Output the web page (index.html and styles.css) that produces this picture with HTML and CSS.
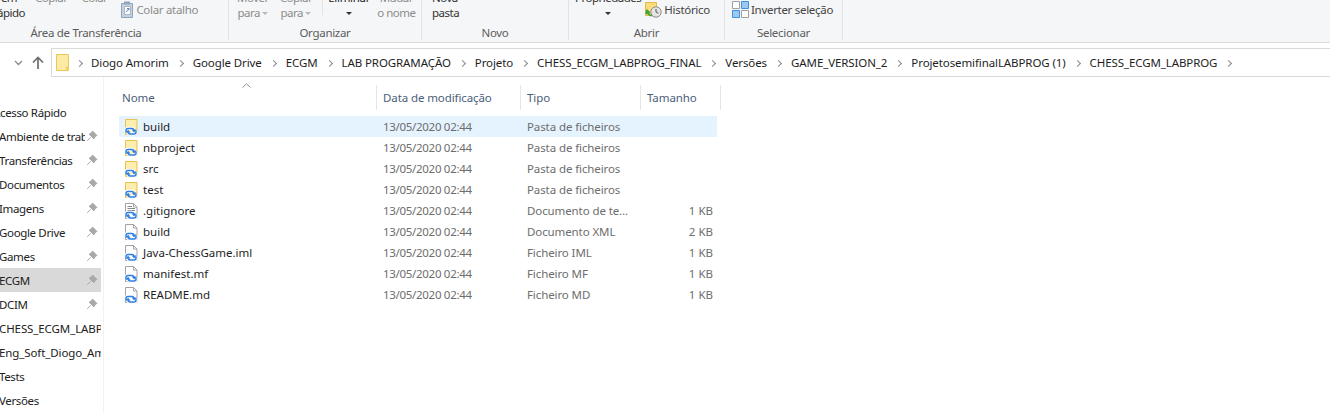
FILE: index.html
```html
<!DOCTYPE html>
<html lang="pt">
<head>
  <meta charset="UTF-8" />
  <title>CHESS_ECGM_LABPROG</title>
  <link rel="stylesheet" href="styles.css">
</head>
<body>
<svg class="defs" width="0" height="0" aria-hidden="true">
  <defs>
    <g id="sync">
      <g fill="none" stroke="#fff" stroke-width="3.4">
        <path d="M3 13 V11.5 Q3 9.5 5 9.5 H9 Q10.5 9.5 11 11"/>
        <path d="M13 11.5 V13 Q13 15 11 15 H7 Q5.5 15 5 13.5"/>
      </g>
      <g fill="none" stroke="#2f7fe0" stroke-width="1.5">
        <path d="M3 13 V11.5 Q3 9.5 5 9.5 H9 Q10.5 9.5 11 11"/>
        <path d="M13 11.5 V13 Q13 15 11 15 H7 Q5.5 15 5 13.5"/>
      </g>
      <path d="M8.6 10.6 H13.6 L11.1 13.6 Z M2.6 13.8 H7.6 L5.1 10.8 Z" fill="#2f7fe0"/>
    </g>
    <symbol id="i-folder" viewBox="0 0 16 16">
      <path d="M2.5 .5 H14 V15.5 H2.5 Z" fill="#fdeeb0" stroke="#e8c14f"/>
      <path d="M10 11 H14 V15.5 H10 Z" fill="#f7d774"/>
      <use href="#sync"/>
    </symbol>
    <symbol id="i-file" viewBox="0 0 16 16">
      <path d="M2.5 .5 H10.5 L14 4 V15.5 H2.5 Z M10.5 .5 V4 H14" fill="#fff" stroke="#a3a3a3"/>
      <use href="#sync"/>
    </symbol>
    <symbol id="i-text" viewBox="0 0 16 16">
      <path d="M2.5 .5 H10.5 L14 4 V15.5 H2.5 Z M10.5 .5 V4 H14" fill="#fff" stroke="#a3a3a3"/>
      <path d="M4.5 3.5 H9 M4.5 5.5 H12 M4.5 7.5 H12" stroke="#8a8a8a"/>
      <use href="#sync"/>
    </symbol>
    <symbol id="i-pin" viewBox="0 0 12 12">
      <path d="M6.5 1 L11 5.5 L9.6 6 L7.8 8.8 L3.2 4.2 L6 2.4 Z M4.6 7.4 L1.2 10.8" fill="#a8a8a8" stroke="#a8a8a8"/>
    </symbol>
  </defs>
</svg>

<header class="ribbon">
  <section class="group group-clip">
    <div class="group-body">
      <div class="item item-fix"><span>em</span><span>rápido</span></div>
      <div class="item item-off item-copy"><span>Copiar</span><span>&nbsp;</span></div>
      <div class="item item-off item-paste"><span>Colar</span><span>&nbsp;</span></div>
      <div class="small item-shortcut">
        <svg width="14" height="17" viewBox="0 0 14 17"><path d="M1.5 2.5 H12.5 V16.5 H1.5 Z" fill="#c4d2e0" stroke="#8ea4ba"/><path d="M4 .5 H10 V3.5 H4 Z" fill="#8ea4ba"/><path d="M4.5 5.5 H10.5 V13.5 H4.5 Z" fill="#fff" stroke="#a9b6c3"/><path d="M6 11 L9 7.5 M7 7.5 H9 V9.5" fill="none" stroke="#5d87b4"/></svg>
        <span class="off-text">Colar atalho</span>
      </div>
    </div>
    <div class="group-label">Área de Transferência</div>
  </section>

  <section class="group group-org">
    <div class="group-body">
      <div class="item item-off"><span>Mover</span><span>para <i class="caret caret-off"></i></span></div>
      <div class="item item-off item-copyto"><span>Copiar</span><span>para <i class="caret caret-off"></i></span></div>
      <div class="divider"></div>
      <div class="item item-delete"><span>Eliminar</span><span><i class="caret"></i></span></div>
      <div class="item item-off item-rename"><span>Mudar</span><span>o nome</span></div>
    </div>
    <div class="group-label">Organizar</div>
  </section>

  <section class="group group-new">
    <div class="group-body">
      <div class="item item-left"><span>Nova</span><span>pasta</span></div>
    </div>
    <div class="group-label">Novo</div>
  </section>

  <section class="group group-open">
    <div class="group-body">
      <div class="item"><span>Propriedades</span><span><i class="caret"></i></span></div>
      <div class="small item-history">
        <svg width="17" height="17" viewBox="0 0 17 17"><path d="M.5 1.5 H11.5 V14.5 H.5 Z" fill="#fbdc7c" stroke="#e3bb4a"/><circle cx="11" cy="11" r="5.2" fill="#e4e4e4" stroke="#8d8d8d"/><path d="M11 8 V11 L13.4 12.2" fill="none" stroke="#555"/><path d="M2 9.5 A5 5 0 0 0 7 14.5 M4.8 12 L2 9.5 L1 13" fill="none" stroke="#3fa53a" stroke-width="1.8"/></svg>
        <span>Histórico</span>
      </div>
    </div>
    <div class="group-label">Abrir</div>
  </section>

  <section class="group group-select">
    <div class="group-body">
      <div class="small">
        <svg width="17" height="17" viewBox="0 0 17 17"><path d="M.5 .5 H7.5 V7.5 H.5 Z M9.5 9.5 H16.5 V16.5 H9.5 Z" fill="#fff" stroke="#a0a0a0"/><path d="M9.5 .5 H16.5 V7.5 H9.5 Z M.5 9.5 H7.5 V16.5 H.5 Z" fill="#9cc9f2" stroke="#3f92de"/></svg>
        <span>Inverter seleção</span>
      </div>
    </div>
    <div class="group-label">Selecionar</div>
  </section>
</header>

<nav class="addressrow">
  <svg class="nav-down" width="9" height="6" viewBox="0 0 9 6"><path d="M1 1 L4.5 4.5 L8 1" fill="none" stroke="#8a8a8a" stroke-width="1.3"/></svg>
  <svg class="nav-up" width="12" height="13" viewBox="0 0 12 13"><path d="M6 13 V1.5 M1 6.5 L6 1.5 L11 6.5" fill="none" stroke="#6d6d6d" stroke-width="1.7"/></svg>
  <div class="address">
    <svg class="address-folder" width="13" height="17" viewBox="0 0 13 17"><path d="M.5 .5 H12.5 V16.5 H.5 Z" fill="#fdeaa4" stroke="#ebc658"/><path d="M10 12.5 H12.5 V16.5 H10 Z" fill="#f5cf62"/></svg>
    <span class="crumb">Diogo Amorim</span>
    <span class="crumb">Google Drive</span>
    <span class="crumb">ECGM</span>
    <span class="crumb">LAB PROGRAMAÇÃO</span>
    <span class="crumb">Projeto</span>
    <span class="crumb">CHESS_ECGM_LABPROG_FINAL</span>
    <span class="crumb">Versões</span>
    <span class="crumb">GAME_VERSION_2</span>
    <span class="crumb">ProjetosemifinalLABPROG (1)</span>
    <span class="crumb">CHESS_ECGM_LABPROG</span>
  </div>
</nav>

<div class="content">
  <aside class="sidebar">
    <div class="side-row side-head">Acesso Rápido</div>
    <div class="side-row">Ambiente de trabalho<svg class="pin"><use href="#i-pin"/></svg></div>
    <div class="side-row">Transferências<svg class="pin"><use href="#i-pin"/></svg></div>
    <div class="side-row">Documentos<svg class="pin"><use href="#i-pin"/></svg></div>
    <div class="side-row">Imagens<svg class="pin"><use href="#i-pin"/></svg></div>
    <div class="side-row">Google Drive<svg class="pin"><use href="#i-pin"/></svg></div>
    <div class="side-row">Games<svg class="pin"><use href="#i-pin"/></svg></div>
    <div class="side-row side-active">ECGM<svg class="pin"><use href="#i-pin"/></svg></div>
    <div class="side-row">DCIM<svg class="pin"><use href="#i-pin"/></svg></div>
    <div class="side-row side-long">CHESS_ECGM_LABPROG</div>
    <div class="side-row side-long">Eng_Soft_Diogo_Amorim</div>
    <div class="side-row">Tests</div>
    <div class="side-row">Versões</div>
  </aside>

  <main class="files">
    <div class="sort-mark"><svg width="9" height="5" viewBox="0 0 9 5"><path d="M.5 4.5 L4.5 .8 L8.5 4.5" fill="none" stroke="#8e8e8e"/></svg></div>
    <div class="file-head">
      <div class="col-head">Nome</div>
      <div class="col-head">Data de modificação</div>
      <div class="col-head">Tipo</div>
      <div class="col-head">Tamanho</div>
    </div>
    <div class="file-row selected"><div class="name"><svg class="ficon"><use href="#i-folder"/></svg>build</div><div class="cell date">13/05/2020 02:44</div><div class="cell">Pasta de ficheiros</div><div class="size"></div></div>
    <div class="file-row"><div class="name"><svg class="ficon"><use href="#i-folder"/></svg>nbproject</div><div class="cell date">13/05/2020 02:44</div><div class="cell">Pasta de ficheiros</div><div class="size"></div></div>
    <div class="file-row"><div class="name"><svg class="ficon"><use href="#i-folder"/></svg>src</div><div class="cell date">13/05/2020 02:44</div><div class="cell">Pasta de ficheiros</div><div class="size"></div></div>
    <div class="file-row"><div class="name"><svg class="ficon"><use href="#i-folder"/></svg>test</div><div class="cell date">13/05/2020 02:44</div><div class="cell">Pasta de ficheiros</div><div class="size"></div></div>
    <div class="file-row"><div class="name"><svg class="ficon"><use href="#i-text"/></svg>.gitignore</div><div class="cell date">13/05/2020 02:44</div><div class="cell">Documento de te...</div><div class="size">1 KB</div></div>
    <div class="file-row"><div class="name"><svg class="ficon"><use href="#i-file"/></svg>build</div><div class="cell date">13/05/2020 02:44</div><div class="cell">Documento XML</div><div class="size">2 KB</div></div>
    <div class="file-row"><div class="name"><svg class="ficon"><use href="#i-file"/></svg>Java-ChessGame.iml</div><div class="cell date">13/05/2020 02:44</div><div class="cell">Ficheiro IML</div><div class="size">1 KB</div></div>
    <div class="file-row"><div class="name"><svg class="ficon"><use href="#i-file"/></svg>manifest.mf</div><div class="cell date">13/05/2020 02:44</div><div class="cell">Ficheiro MF</div><div class="size">1 KB</div></div>
    <div class="file-row"><div class="name"><svg class="ficon"><use href="#i-file"/></svg>README.md</div><div class="cell date">13/05/2020 02:44</div><div class="cell">Ficheiro MD</div><div class="size">1 KB</div></div>
  </main>
</div>
</body>
</html>
```

FILE: styles.css
```css
html, body {
  margin: 0;
  height: 100%;
  overflow: hidden;
}
body {
  background: #fff;
  font-family: "Noto Sans", "Open Sans", sans-serif;
  font-size: 11.5px;
  color: #1e1e1e;
}
.defs {
  position: absolute;
}

/* ribbon */
.ribbon {
  display: flex;
  height: 42px;
  margin-left: -56px;
  background: #f5f6f7;
  overflow: hidden;
  letter-spacing: -0.3px;
}
.group {
  display: flex;
  flex-direction: column;
  justify-content: flex-end;
  flex: none;
  height: 40px;
  border-right: 1px solid #e2e3e4;
  box-sizing: border-box;
}
.group-clip { width: 285px; }
.group-org { width: 193px; }
.group-new { width: 147px; }
.group-open { width: 156px; }
.group-select { width: 118px; }
.group-body {
  display: flex;
  align-items: flex-end;
  flex: 1;
  min-height: 0;
  padding-bottom: 6px;
}
.group-label {
  height: 14px;
  line-height: 14px;
  text-align: center;
  color: #5c5c5c;
}
.group-clip .group-body { padding-left: 47px; }
.group-org .group-body { padding-left: 8px; }
.group-new .group-body { padding-left: 10px; }
.group-open .group-body { padding-left: 6px; }
.group-select .group-body { padding-left: 7px; }

.item {
  display: flex;
  flex-direction: column;
  align-items: center;
  flex: none;
  color: #333;
  line-height: 15px;
  letter-spacing: -0.5px;
}
.item span {
  display: block;
  height: 15px;
  white-space: nowrap;
}
.item-left { align-items: flex-start; }
.item-off { color: #8c8c8c; }
.item-fix { width: 36px; }
.item-copy { margin-left: 8px; }
.item-paste { margin-left: 14px; }
.item-shortcut { margin-left: 13px; gap: 5px; }
.item-copyto { margin-left: 11px; }
.item-delete { margin-left: 5px; color: #262626; letter-spacing: -0.3px; }
.item-rename { margin-left: 7px; }
.item-history { margin-left: 4px; }
.small {
  display: flex;
  align-items: center;
  flex: none;
  gap: 2px;
  height: 17px;
  margin-bottom: 2px;
  color: #444;
  white-space: nowrap;
}
.off-text { color: #8c8c8c; }
.divider {
  align-self: flex-start;
  width: 1px;
  height: 15px;
  margin-left: 10px;
  background: #e2e3e4;
}
.caret {
  display: inline-block;
  width: 0;
  height: 0;
  vertical-align: middle;
  border-left: 3px solid transparent;
  border-right: 3px solid transparent;
  border-top: 3px solid #333;
}
.caret-off { border-top-color: #b8b8b8; }

/* address bar */
.addressrow {
  display: flex;
  align-items: center;
  height: 35px;
  box-sizing: border-box;
  padding-top: 5px;
  border-top: 1px solid #dcdcdc;
  letter-spacing: -0.1px;
}
.nav-down { margin-left: 14px; }
.nav-up { margin-left: 9px; }
.address {
  display: flex;
  align-items: center;
  flex: 1;
  height: 29px;
  margin-left: 7px;
  border: 1px solid #d9d9d9;
  border-right: none;
  box-sizing: border-box;
  white-space: nowrap;
}
.address-folder { margin-left: 4px; margin-right: 22px; }
.crumb {
  position: relative;
  margin-right: 24px;
}
.crumb::after,
.crumb:first-of-type::before {
  content: "";
  position: absolute;
  right: -14px;
  top: 6px;
  width: 4px;
  height: 4px;
  border-top: 1px solid #8a8a8a;
  border-right: 1px solid #8a8a8a;
  transform: rotate(45deg);
}
.crumb:first-of-type::before {
  right: auto;
  left: -14px;
}

/* sidebar */
.content {
  display: flex;
}
.sidebar {
  flex: none;
  width: 104px;
  height: 335px;
  box-sizing: border-box;
  padding-top: 23px;
  border-right: 1px solid #f2f2f2;
  overflow: hidden;
  letter-spacing: -0.35px;
}
.side-row {
  display: flex;
  align-items: center;
  position: relative;
  width: 101px;
  height: 24px;
  background: #fff;
  text-indent: -1px;
  white-space: nowrap;
  overflow: hidden;
  color: #222;
}
.side-head { text-indent: -7px; }
.side-long { letter-spacing: -0.1px; }
.side-active { background: #d9d9d9; }
.pin {
  position: absolute;
  right: 0;
  top: 0;
  width: 12px;
  height: 12px;
  padding: 6px 3px 6px 1px;
  background: inherit;
}

/* file list */
.files {
  position: relative;
  flex: none;
  padding: 8px 0 0 15px;
}
.sort-mark {
  position: absolute;
  left: 138px;
  top: 6px;
  line-height: 0;
}
.file-head {
  display: grid;
  grid-template-columns: 258px 144px 120px 80px;
  height: 25px;
  margin-bottom: 6px;
  letter-spacing: -0.1px;
}
.col-head {
  line-height: 25px;
  padding-left: 6px;
  color: #4c607a;
  border-right: 1px solid #e5e5e5;
}
.col-head:first-child { padding-left: 3px; }
.file-row {
  display: grid;
  grid-template-columns: 258px 144px 120px 76px;
  width: 598px;
  height: 21px;
  line-height: 21px;
}
.selected { background: #e5f3ff; }
.name {
  display: flex;
  align-items: center;
  color: #1e1e1e;
}
.ficon {
  width: 16px;
  height: 16px;
  margin: 0 4px 0 4px;
}
.cell {
  padding-left: 6px;
  color: #6d6d6d;
  letter-spacing: -0.1px;
}
.date { letter-spacing: -0.3px; }
.size {
  padding-right: 4px;
  text-align: right;
  color: #6d6d6d;
}
```
